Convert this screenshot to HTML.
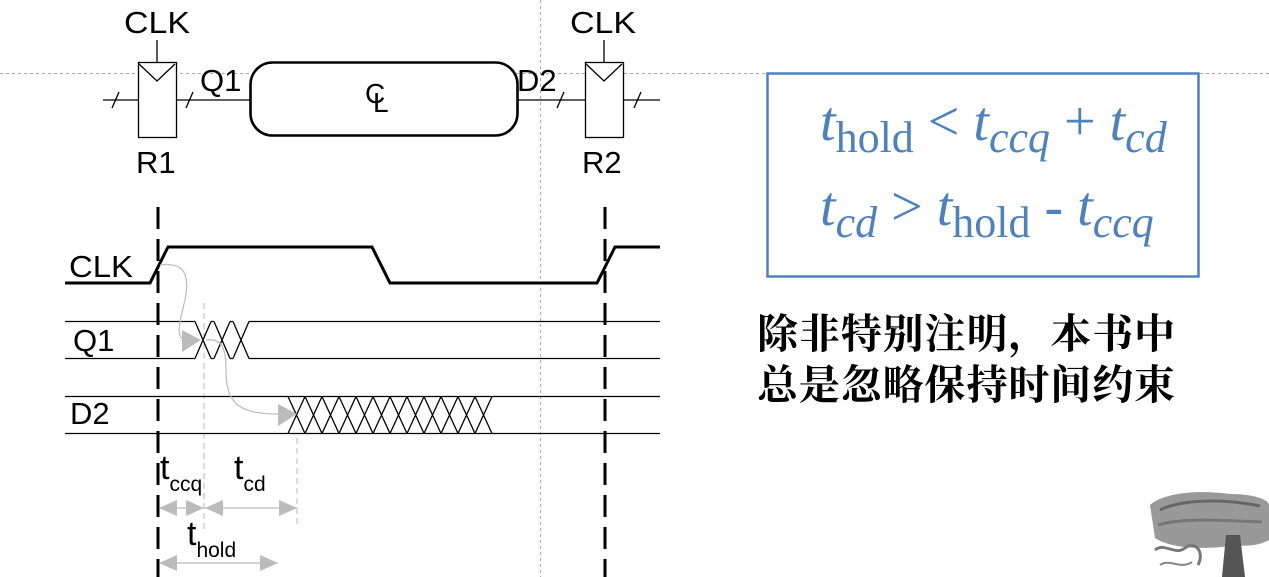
<!DOCTYPE html>
<html><head><meta charset="utf-8"><style>
html,body{margin:0;padding:0;background:#fff;}
svg{display:block}
</style></head><body>
<svg width="1269" height="577" viewBox="0 0 1269 577" xmlns="http://www.w3.org/2000/svg" font-family="Liberation Sans, sans-serif">
<!-- guides -->
<line x1="0" y1="73.5" x2="1269" y2="73.5" stroke="#aaa" stroke-width="1" stroke-dasharray="3,3"/>
<line x1="540.5" y1="0" x2="540.5" y2="577" stroke="#aaa" stroke-width="1" stroke-dasharray="3,3"/>
<!-- schematic -->
<g stroke="#000" fill="none" stroke-width="1.3">
<line x1="103" y1="100" x2="250" y2="100"/>
<line x1="518" y1="100" x2="660" y2="100"/>
<line x1="112" y1="108" x2="119" y2="92"/>
<line x1="186" y1="108" x2="193" y2="92"/>
<line x1="557" y1="108" x2="564" y2="92"/>
<line x1="634" y1="108" x2="641" y2="92"/>
<rect x="138.5" y="62.5" width="38" height="75" fill="#fff"/>
<polyline points="139,64 157,81 175,64"/>
<line x1="157" y1="40" x2="157" y2="62"/>
<rect x="585.5" y="62.5" width="38" height="75" fill="#fff"/>
<polyline points="586,64 604,81 622,64"/>
<line x1="604" y1="40" x2="604" y2="62"/>
<rect x="250.5" y="62.5" width="267" height="73" rx="22" stroke-width="2.6" fill="#fff"/>
</g>
<g font-size="31" fill="#000">
<text x="124" y="33" textLength="66" lengthAdjust="spacingAndGlyphs">CLK</text>
<text x="570" y="33" textLength="66" lengthAdjust="spacingAndGlyphs">CLK</text>
<text x="200" y="91">Q1</text>
<text x="517" y="91">D2</text>
<text x="136" y="173">R1</text>
<text x="582" y="173">R2</text>
<text x="365" y="103" font-size="28">C</text>
<text x="373" y="112" font-size="28">L</text>
</g>
<!-- dashed clock edges -->
<line x1="158" y1="207" x2="158" y2="577" stroke="#000" stroke-width="3" stroke-dasharray="22,10"/>
<line x1="605" y1="207" x2="605" y2="577" stroke="#000" stroke-width="3" stroke-dasharray="22,10"/>
<!-- gray dashed -->
<line x1="204" y1="303" x2="204" y2="530" stroke="#bbb" stroke-width="1" stroke-dasharray="6,4"/>
<line x1="297" y1="438" x2="297" y2="525" stroke="#bbb" stroke-width="1" stroke-dasharray="6,4"/>
<!-- CLK waveform -->
<polyline points="65,283 150,283 168,247 372,247 390,283 597,283 615,247 660,247" stroke="#000" stroke-width="3" fill="none"/>
<g font-size="31" fill="#000">
<text x="69" y="277" textLength="64" lengthAdjust="spacingAndGlyphs">CLK</text>
<text x="73" y="351">Q1</text>
<text x="70" y="424">D2</text>
</g>
<!-- Q1 -->
<g stroke="#000" stroke-width="1.3" fill="none">
<line x1="65" y1="321.5" x2="195" y2="321.5"/><line x1="65" y1="358.5" x2="195" y2="358.5"/>
<line x1="249" y1="321.5" x2="660" y2="321.5"/><line x1="249" y1="358.5" x2="660" y2="358.5"/>
<path d="M195,321.5 L211,358.5 M195,358.5 L211,321.5 M214,321.5 L230,358.5 M214,358.5 L230,321.5 M233,321.5 L249,358.5 M233,358.5 L249,321.5 M211,321.5 H214 M211,358.5 H214 M230,321.5 H233 M230,358.5 H233"/>
<line x1="65" y1="396.5" x2="288" y2="396.5"/><line x1="65" y1="433.5" x2="288" y2="433.5"/>
<line x1="492" y1="396.5" x2="660" y2="396.5"/><line x1="492" y1="433.5" x2="660" y2="433.5"/>
<path d="M288,396.5 L305,433.5 M288,433.5 L305,396.5 M305,396.5 L322,433.5 M305,433.5 L322,396.5 M322,396.5 L339,433.5 M322,433.5 L339,396.5 M339,396.5 L356,433.5 M339,433.5 L356,396.5 M356,396.5 L373,433.5 M356,433.5 L373,396.5 M373,396.5 L390,433.5 M373,433.5 L390,396.5 M390,396.5 L407,433.5 M390,433.5 L407,396.5 M407,396.5 L424,433.5 M407,433.5 L424,396.5 M424,396.5 L441,433.5 M424,433.5 L441,396.5 M441,396.5 L458,433.5 M441,433.5 L458,396.5 M458,396.5 L475,433.5 M458,433.5 L475,396.5 M475,396.5 L492,433.5 M475,433.5 L492,396.5"/>
<line x1="288" y1="396.5" x2="492" y2="396.5"/><line x1="288" y1="433.5" x2="492" y2="433.5"/>
</g>
<!-- gray curves -->
<g stroke="#bbb" stroke-width="1.2" fill="none">
<path d="M160,265 C185,262 190,275 185,300 C180,320 175,338 185,340"/>
<path d="M206,340 C222,338 226,348 226,370 C226,405 240,414 280,414"/>
</g>
<g fill="#bbb">
<polygon points="182,330 201,340 182,352"/>
<polygon points="278,404 297,414 278,426"/>
</g>
<!-- timing arrows -->
<g stroke="#bbb" stroke-width="1.3">
<line x1="160" y1="508" x2="297" y2="508"/>
<line x1="160" y1="563" x2="278" y2="563"/>
</g>
<g fill="#bbb">
<polygon points="159,508 177,500 177,516"/>
<polygon points="204,508 186,500 186,516"/>
<polygon points="205,508 223,500 223,516"/>
<polygon points="297,508 279,500 279,516"/>
<polygon points="159,563 177,555 177,571"/>
<polygon points="278,563 260,555 260,571"/>
</g>
<g fill="#000">
<text x="160" y="479" font-size="34">t<tspan font-size="21" dy="12">ccq</tspan></text>
<text x="234" y="479" font-size="34">t<tspan font-size="21" dy="12">cd</tspan></text>
<text x="187" y="545" font-size="34">t<tspan font-size="21" dy="12">hold</tspan></text>
</g>
<!-- formula box -->
<rect x="767.5" y="73.5" width="431" height="203" fill="none" stroke="#4f81bd" stroke-width="2.5"/>
<g font-family="Liberation Serif, serif" fill="#4f81bd" font-size="56">
<text x="820" y="140"><tspan font-style="italic">t</tspan><tspan dy="12" font-size="44">hold</tspan><tspan dy="-12"> &lt; </tspan><tspan font-style="italic">t</tspan><tspan dy="12" font-size="44" font-style="italic">ccq</tspan><tspan dy="-12"> + </tspan><tspan font-style="italic">t</tspan><tspan dy="12" font-size="44" font-style="italic">cd</tspan></text>
<text x="820" y="225"><tspan font-style="italic">t</tspan><tspan dy="12" font-size="44" font-style="italic">cd</tspan><tspan dy="-12"> &gt; </tspan><tspan font-style="italic">t</tspan><tspan dy="12" font-size="44">hold</tspan><tspan dy="-12"> - </tspan><tspan font-style="italic">t</tspan><tspan dy="12" font-size="44" font-style="italic">ccq</tspan></text>
</g>
<g font-family="Noto Serif CJK SC, serif" font-weight="bold" font-size="41" fill="#000">
<text x="757" y="348" textLength="418" lengthAdjust="spacing">除非特别注明，本书中</text>
<text x="757" y="399" textLength="418" lengthAdjust="spacing">总是忽略保持时间约束</text>
</g>
<!-- tree -->
<g>
<path d="M1150,505 C1165,492 1200,490 1230,494 C1255,494 1269,500 1269,505 L1269,540 C1255,548 1240,545 1230,546 C1200,550 1170,548 1155,538 Z" fill="#999"/>
<path d="M1160,510 C1180,500 1220,498 1260,506" stroke="#666" stroke-width="3" fill="none"/>
<path d="M1158,525 C1180,518 1220,520 1262,522" stroke="#777" stroke-width="3" fill="none"/>
<path d="M1226,535 L1222,577 L1245,577 L1240,535 Z" fill="#555"/>
<path d="M1155,550 C1165,542 1175,556 1185,548 C1195,540 1205,552 1198,565" stroke="#777" stroke-width="3" fill="none"/>
<path d="M1160,565 C1170,558 1180,570 1192,562" stroke="#888" stroke-width="2" fill="none"/>
</g>
</svg>
</body></html>
